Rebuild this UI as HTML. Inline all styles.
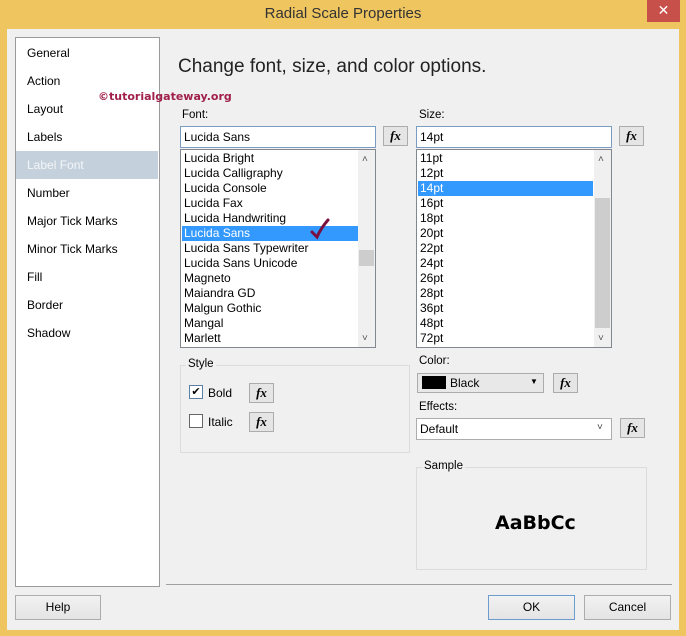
<!DOCTYPE html>
<html><head><style>
*{margin:0;padding:0;box-sizing:border-box}
body{width:686px;height:636px;background:#efc55f;font-family:"Liberation Sans",sans-serif;font-size:12px;color:#000;position:relative;overflow:hidden}
.a{position:absolute}
.win{left:7px;top:29px;width:672px;height:601px;background:#f0f0f0}
.nav{left:15px;top:37px;width:145px;height:550px;background:#fff;border:1px solid #9a9a9a}
.nav div{position:absolute;left:11px;font-size:12px}
.tb{background:#fff;border:1px solid #7a9cc0;height:22px;padding:3px 3px;font-size:12px}
.fx{width:25px;height:20px;border:1px solid #acacac;background:#e5e5e5;font-family:"Liberation Serif",serif;font-style:italic;font-weight:bold;font-size:13px;text-align:center;line-height:18px}
.list{background:#fff;border:1px solid #828790}
.list div{position:absolute;left:3px;font-size:12px;line-height:15px}
.btn{height:25px;border:1px solid #acacac;background:linear-gradient(#f2f2f2,#e4e4e4);text-align:center;line-height:23px;font-size:12px}
.lbl{font-size:11.5px}
</style></head><body>
<div class="a" style="left:0;top:5px;width:686px;text-align:center;font-size:15px;color:#333">Radial Scale Properties</div>
<div class="a" style="left:647px;top:0;width:33px;height:22px;background:#c7504a;color:#fff;text-align:center;line-height:20px;font-size:14px">✕</div>
<div class="a win"></div>
<div class="a nav">
<div style="top:8px">General</div>
<div style="top:36px">Action</div>
<div style="top:64px">Layout</div>
<div style="top:92px">Labels</div>
<div style="top:113px;left:0;width:142px;height:28px;background:#c4d0dc"></div>
<div style="top:120px;color:#f4f6f8">Label Font</div>
<div style="top:148px">Number</div>
<div style="top:176px">Major Tick Marks</div>
<div style="top:204px">Minor Tick Marks</div>
<div style="top:232px">Fill</div>
<div style="top:260px">Border</div>
<div style="top:288px">Shadow</div>
</div>
<div class="a" style="left:166px;top:584px;width:506px;height:1px;background:#a0a0a0"></div>
<div class="a" style="left:178px;top:56px;font-size:19px;color:#222">Change font, size, and color options.</div>
<div class="a" style="left:98px;top:90px;font-weight:bold;color:#a0204a;font-family:'DejaVu Sans',sans-serif;font-size:11px">©tutorialgateway.org</div>
<div class="a lbl" style="left:182px;top:109px">Font:</div>
<div class="a lbl" style="left:419px;top:109px">Size:</div>
<div class="a tb" style="left:180px;top:126px;width:196px">Lucida Sans</div>
<div class="a fx" style="left:383px;top:126px">fx</div>
<div class="a tb" style="left:416px;top:126px;width:196px">14pt</div>
<div class="a fx" style="left:619px;top:126px">fx</div>
<div class="a list" style="left:180px;top:149px;width:196px;height:199px">
<div style="top:1px">Lucida Bright</div><div style="top:16px">Lucida Calligraphy</div><div style="top:31px">Lucida Console</div><div style="top:46px">Lucida Fax</div><div style="top:61px">Lucida Handwriting</div>
<div style="top:76px;left:1px;width:176px;height:15px;background:#3399ff"></div>
<div style="top:76px;color:#fff">Lucida Sans</div>
<svg style="position:absolute;left:129px;top:68px" width="20" height="22" viewBox="0 0 20 22"><path d="M2 14 L7 19 Q11 10 18 2" fill="none" stroke="#7a1040" stroke-width="3" stroke-linecap="round"/></svg>
<div style="top:91px">Lucida Sans Typewriter</div><div style="top:106px">Lucida Sans Unicode</div><div style="top:121px">Magneto</div><div style="top:136px">Maiandra GD</div><div style="top:151px">Malgun Gothic</div><div style="top:166px">Mangal</div><div style="top:181px">Marlett</div>
<div style="left:177px;top:0;width:17px;height:197px;background:#f0f0f0"></div>
<div style="left:178px;top:100px;width:15px;height:16px;background:#cdcdcd"></div>
<div style="left:181px;top:2px;font-size:10px;color:#555">˄</div>
<div style="left:181px;top:181px;font-size:10px;color:#555">˅</div>
</div>
<div class="a list" style="left:416px;top:149px;width:196px;height:199px">
<div style="top:1px">11pt</div><div style="top:16px">12pt</div>
<div style="top:31px;left:1px;width:175px;height:15px;background:#3399ff"></div>
<div style="top:31px;color:#fff">14pt</div>
<div style="top:46px">16pt</div><div style="top:61px">18pt</div><div style="top:76px">20pt</div><div style="top:91px">22pt</div><div style="top:106px">24pt</div><div style="top:121px">26pt</div><div style="top:136px">28pt</div><div style="top:151px">36pt</div><div style="top:166px">48pt</div><div style="top:181px">72pt</div>
<div style="left:177px;top:0;width:17px;height:197px;background:#f0f0f0"></div>
<div style="left:178px;top:48px;width:15px;height:130px;background:#cdcdcd"></div>
<div style="left:181px;top:2px;font-size:10px;color:#555">˄</div>
<div style="left:181px;top:181px;font-size:10px;color:#555">˅</div>
</div>
<div class="a" style="left:180px;top:365px;width:230px;height:88px;border:1px solid #dcdcdc"></div>
<div class="a lbl" style="left:186px;top:358px;background:#f0f0f0;padding:0 2px">Style</div>
<div class="a" style="left:189px;top:385px;width:14px;height:14px;border:1px solid #5a7ea8;background:#fff;font-size:11px;line-height:12px;text-align:center">✔</div>
<div class="a" style="left:208px;top:386px">Bold</div>
<div class="a fx" style="left:249px;top:383px">fx</div>
<div class="a" style="left:189px;top:414px;width:14px;height:14px;border:1px solid #666;background:#fff"></div>
<div class="a" style="left:208px;top:415px">Italic</div>
<div class="a fx" style="left:249px;top:412px">fx</div>
<div class="a lbl" style="left:419px;top:355px">Color:</div>
<div class="a" style="left:417px;top:373px;width:127px;height:20px;border:1px solid #acacac;background:#e8e8e8"></div>
<div class="a" style="left:422px;top:376px;width:24px;height:13px;background:#000"></div>
<div class="a" style="left:450px;top:376px">Black</div>
<div class="a" style="left:530px;top:377px;font-size:8px">▼</div>
<div class="a fx" style="left:553px;top:373px">fx</div>
<div class="a lbl" style="left:419px;top:401px">Effects:</div>
<div class="a tb" style="left:416px;top:418px;width:196px;border-color:#acacac">Default</div>
<div class="a" style="left:597px;top:422px;font-size:10px;color:#444">˅</div>
<div class="a fx" style="left:620px;top:418px">fx</div>
<div class="a" style="left:416px;top:467px;width:231px;height:103px;border:1px solid #dcdcdc"></div>
<div class="a lbl" style="left:422px;top:460px;background:#f0f0f0;padding:0 2px">Sample</div>
<div class="a" style="left:495px;top:512px;font-size:19px;font-weight:bold;font-family:'DejaVu Sans',sans-serif">AaBbCc</div>
<div class="a btn" style="left:15px;top:595px;width:86px">Help</div>
<div class="a btn" style="left:488px;top:595px;width:87px;border-color:#6d9ccf">OK</div>
<div class="a btn" style="left:584px;top:595px;width:87px">Cancel</div>
</body></html>
